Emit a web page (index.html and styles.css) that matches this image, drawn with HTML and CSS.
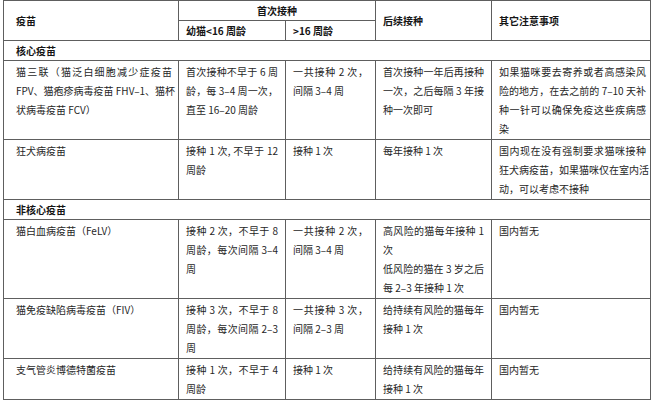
FILE: index.html
```
<!DOCTYPE html>
<html lang="zh-CN">
<head>
<meta charset="utf-8">
<title>猫咪疫苗接种</title>
<link rel="stylesheet" href="styles.css">
</head>
<body>
<table class="vac">
  <colgroup>
    <col class="w1"><col class="w2"><col class="w3"><col class="w4"><col class="w5">
  </colgroup>
  <thead>
    <tr>
      <th rowspan="2" class="c1">疫苗</th>
      <th colspan="2" class="center">首次接种</th>
      <th rowspan="2">后续接种</th>
      <th rowspan="2">其它注意事项</th>
    </tr>
    <tr>
      <th>幼猫&lt;16 周龄</th>
      <th>&gt;16 周龄</th>
    </tr>
  </thead>
  <tbody>
    <tr class="cat"><td colspan="5">核心疫苗</td></tr>
    <tr>
      <td class="c1"><span class="l j">猫三联（猫泛白细胞减少症疫苗</span><span class="l j">FPV、猫疱疹病毒疫苗 FHV–1、猫杯</span><span class="l">状病毒疫苗 FCV）</span></td>
      <td><span class="l j">首次接种不早于 6 周</span><span class="l j">龄，每 3–4 周一次，</span><span class="l">直至 16–20 周龄</span></td>
      <td><span class="l j">一共接种 2 次，</span><span class="l">间隔 3–4 周</span></td>
      <td><span class="l j">首次接种一年后再接种</span><span class="l j">一次，之后每隔 3 年接</span><span class="l">种一次即可</span></td>
      <td class="c5"><span class="l j">如果猫咪要去寄养或者高感染风</span><span class="l j">险的地方，在去之前的 7–10 天补</span><span class="l j">种一针可以确保免疫这些疾病感</span><span class="l">染</span></td>
    </tr>
    <tr>
      <td class="c1"><span class="l">狂犬病疫苗</span></td>
      <td><span class="l j">接种 1 次, 不早于 12</span><span class="l">周龄</span></td>
      <td><span class="l">接种 1 次</span></td>
      <td><span class="l">每年接种 1 次</span></td>
      <td class="c5"><span class="l j">国内现在没有强制要求猫咪接种</span><span class="l j">狂犬病疫苗，如果猫咪仅在室内活</span><span class="l">动，可以考虑不接种</span></td>
    </tr>
    <tr class="cat"><td colspan="5">非核心疫苗</td></tr>
    <tr>
      <td class="c1"><span class="l">猫白血病疫苗（FeLV）</span></td>
      <td><span class="l j">接种 2 次，不早于 8</span><span class="l j">周龄，每次间隔 3–4</span><span class="l">周</span></td>
      <td><span class="l j">一共接种 2 次，</span><span class="l">间隔 3–4 周</span></td>
      <td><span class="l j">高风险的猫每年接种 1</span><span class="l">次</span><span class="l j">低风险的猫在 3 岁之后</span><span class="l">每 2–3 年接种 1 次</span></td>
      <td class="c5"><span class="l">国内暂无</span></td>
    </tr>
    <tr>
      <td class="c1"><span class="l">猫免疫缺陷病毒疫苗（FIV）</span></td>
      <td><span class="l j">接种 3 次，不早于 8</span><span class="l j">周龄，每次间隔 2–3</span><span class="l">周</span></td>
      <td><span class="l j">一共接种 3 次，</span><span class="l">间隔 2–3 周</span></td>
      <td><span class="l j">给持续有风险的猫每年</span><span class="l">接种 1 次</span></td>
      <td class="c5"><span class="l">国内暂无</span></td>
    </tr>
    <tr>
      <td class="c1"><span class="l">支气管炎博德特菌疫苗</span></td>
      <td><span class="l j">接种 1 次，不早于 4</span><span class="l">周龄</span></td>
      <td><span class="l">接种 1 次</span></td>
      <td><span class="l j">给持续有风险的猫每年</span><span class="l">接种 1 次</span></td>
      <td class="c5"><span class="l">国内暂无</span></td>
    </tr>
  </tbody>
</table>
</body>
</html>
```
FILE: styles.css
```
* { box-sizing: border-box; }
html, body { margin: 0; padding: 0; background: #fff; }
body {
  font-family: "Noto Sans CJK SC", "Liberation Sans", sans-serif;
  font-size: 10px;
  color: #262626;
}
.vac {
  border-collapse: collapse;
  table-layout: fixed;
  width: 647px;
  margin-left: 3px;
}
.w1 { width: 175px; }
.w2 { width: 107px; }
.w3 { width: 90px; }
.w4 { width: 116px; }
.w5 { width: 159px; }
.vac th, .vac td {
  border: 1px solid #5e5e5e;
  line-height: 19px;
  padding: 1px 7px;
  text-align: left;
  vertical-align: top;
  font-weight: normal;
}
.vac th {
  padding: 0 7px;
  vertical-align: middle;
  font-weight: 600;
  color: #151515;
}
.vac th.center { text-align: center; }
.vac .c1 { padding-left: 12px; padding-right: 6px; }
.vac .c5 { padding-right: 4px; }
.cat td {
  padding: 0 12px;
  font-weight: 600;
  color: #151515;
}
.l { display: block; white-space: nowrap; }
.j { text-align: justify; text-align-last: justify; }
```
